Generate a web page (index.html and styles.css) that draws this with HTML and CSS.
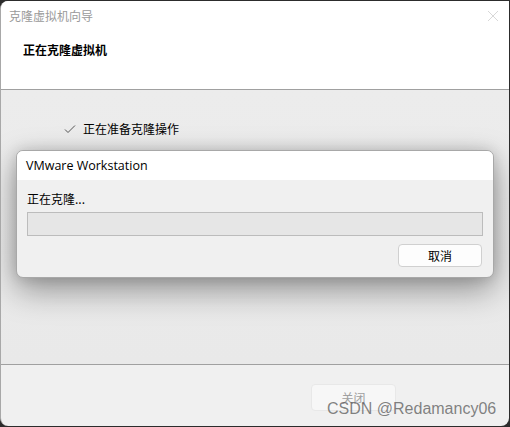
FILE: index.html
```html
<!DOCTYPE html>
<html>
<head>
<meta charset="utf-8">
<link rel="stylesheet" href="styles.css">
</head>
<body>
<div class="win">
  <div class="header">
    <div class="titlebar">
      <span class="wtitle">克隆虚拟机向导</span>
      <svg class="close" width="12" height="12" viewBox="0 0 12 12"><path d="M1 1L11 11M11 1L1 11" stroke="#d8d8d8" stroke-width="1" fill="none"/></svg>
    </div>
    <div class="htitle">正在克隆虚拟机</div>
  </div>
  <div class="body">
    <div class="step">
      <svg class="check" width="12" height="10" viewBox="0 0 12 10"><path d="M1 5.5L4 8.5L11 1.5" stroke="#555" stroke-width="1" fill="none"/></svg>
      <span>正在准备克隆操作</span>
    </div>
  </div>
  <div class="footer">
    <div class="btn disabled">关闭</div>
  </div>
  <div class="modal">
    <div class="mtitle">VMware Workstation</div>
    <div class="mbody">
      <div class="mlabel">正在克隆...</div>
      <div class="progress"></div>
      <div class="mactions"><div class="btn cancel">取消</div></div>
    </div>
  </div>
  <div class="watermark">CSDN @Redamancy06</div>
</div>
</body>
</html>
```
FILE: styles.css
```css
html, body {
  margin: 0;
  padding: 0;
  background: #2c2c2c;
  width: 510px;
  height: 427px;
  overflow: hidden;
}
body {
  font-family: "Noto Sans CJK SC", "Noto Sans", sans-serif;
  font-size: 12px;
}
.win {
  position: relative;
  margin-top: 1px;
  width: 508px;
  height: 425px;
  background: #f0f0f0;
  border-left: 1px solid #a8a8a8;
  border-radius: 8px 0 8px 8px;
  overflow: hidden;
  display: flex;
  flex-direction: column;
}
.header {
  background: #fff;
  height: 88px;
  border-bottom: 1px solid #a0a0a0;
}
.titlebar {
  height: 29px;
  display: flex;
  align-items: center;
  justify-content: space-between;
  padding: 0 10px 0 8px;
}
.wtitle {
  color: #9a9a9a;
  font-size: 12px;
}
.htitle {
  margin-top: 11px;
  padding-left: 22px;
  font-weight: bold;
  font-size: 12px;
  color: #000;
}
.body {
  flex: 1;
  background: linear-gradient(#ececec, #e9e9e9);
  border-bottom: 1px solid #a0a0a0;
  padding-top: 30px;
}
.step {
  display: flex;
  align-items: center;
  padding-left: 63px;
  gap: 7px;
  color: #000;
  font-size: 12px;
}
.footer {
  height: 61px;
  display: flex;
  justify-content: flex-end;
  padding: 19px 113px 0 0;
  box-sizing: border-box;
}
.btn {
  width: 82px;
  height: 24px;
  box-sizing: border-box;
  border: 1px solid #d0d0d0;
  border-radius: 4px;
  background: #fdfdfd;
  display: flex;
  align-items: center;
  justify-content: center;
  font-size: 12px;
}
.btn.disabled {
  width: 85px;
  color: #a0a0a0;
  border-color: #e8e8e8;
  background: #f7f7f7;
  height: 27px;
}
.modal {
  position: absolute;
  left: 15px;
  top: 149px;
  width: 478px;
  height: 128px;
  box-sizing: border-box;
  border: 1px solid #a8a8a8;
  border-radius: 7px;
  background: #f0f0f0;
  overflow: hidden;
  box-shadow: 0 12px 32px rgba(0,0,0,0.38), 0 0 14px rgba(0,0,0,0.14);
  display: flex;
  flex-direction: column;
}
.mtitle {
  height: 29px;
  background: #fff;
  display: flex;
  align-items: center;
  padding-left: 9px;
  font-family: "Open Sans", "Noto Sans", sans-serif;
  font-size: 12.5px;
  color: #000;
}
.mbody {
  padding: 10px 10px 0 10px;
}
.mlabel {
  height: 18px;
  line-height: 18px;
  color: #000;
}
.progress {
  margin-top: 4px;
  height: 24px;
  box-sizing: border-box;
  border: 1px solid #bcbcbc;
  background: #e6e6e6;
}
.mactions {
  display: flex;
  justify-content: flex-end;
  margin-top: 8px;
  padding-right: 1px;
}
.btn.cancel {
  width: 84px;
  height: 23px;
}
.watermark {
  position: absolute;
  left: 326px;
  top: 399px;
  font-family: "Liberation Sans", Arial, sans-serif;
  font-size: 16px;
  color: rgba(90,90,90,0.75);
  white-space: nowrap;
}
```
